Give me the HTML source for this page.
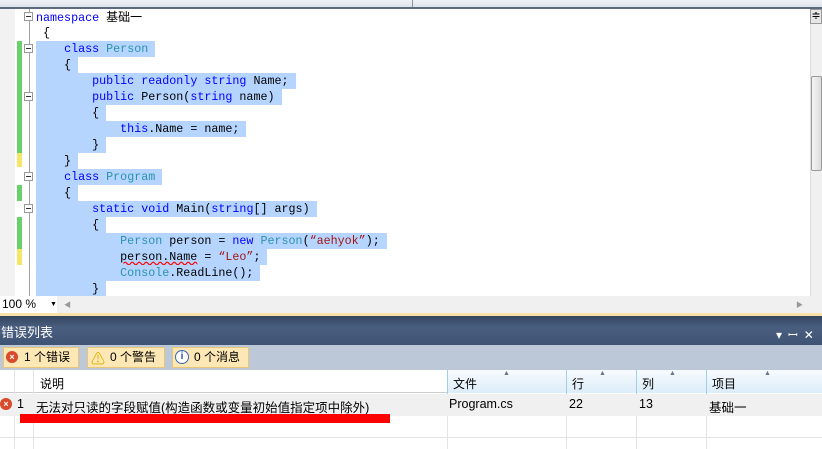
<!DOCTYPE html>
<html><head><meta charset="utf-8"><style>
*{margin:0;padding:0;box-sizing:border-box}
body{width:822px;height:449px;overflow:hidden;background:#fff;position:relative;font-family:"Liberation Sans","Noto Sans CJK SC",sans-serif}
.abs{position:absolute}
.code{font-family:"Liberation Mono","Noto Sans CJK SC",monospace;font-size:11.7px;line-height:16px;white-space:pre}
.ln{position:absolute;left:36px;height:16px}
.sel{background:#b5d5ff}
.k{color:#0000ff}.t{color:#2b91af}.s{color:#a31515}.b{color:#000}
.box{position:absolute;left:24px;width:9px;height:9px;border:1px solid #999;background:#fff}
.box:after{content:"";position:absolute;left:1px;top:3px;width:5px;height:1px;background:#333}
.cjk{font-family:"Liberation Sans","Noto Sans CJK SC",sans-serif;font-size:12px}
.g{position:absolute;width:1px;background:#e4e4e4;top:394px;height:55px}
.h{position:absolute;width:1px;background:#9fd0ea;top:370px;height:24px}
</style></head><body>
<div class="abs" style="left:0;top:0;width:822px;height:7px;background:linear-gradient(#eef1f6,#dde3ec)"></div>
<div class="abs" style="left:412px;top:0;width:1px;height:7px;background:#8a94a4"></div>
<div class="abs" style="left:0;top:7px;width:822px;height:2px;background:#5d6a7c"></div>
<div class="abs" style="left:0;top:9px;width:15px;height:287px;background:#f2f2f2"></div>
<div class="abs" style="left:29px;top:9px;width:1px;height:287px;background:#a0a0a0"></div>
<div class="abs" style="left:17px;top:41px;width:5px;height:112px;background:#6ad06a"></div>
<div class="abs" style="left:17px;top:153px;width:5px;height:14px;background:#f5e66a"></div>
<div class="abs" style="left:17px;top:185px;width:5px;height:16px;background:#6ad06a"></div>
<div class="abs" style="left:17px;top:217px;width:5px;height:32px;background:#6ad06a"></div>
<div class="abs" style="left:17px;top:249px;width:5px;height:16px;background:#f5e66a"></div>
<div class="box" style="top:12px"></div>
<div class="box" style="top:44px"></div>
<div class="box" style="top:92px"></div>
<div class="box" style="top:172px"></div>
<div class="box" style="top:204px"></div>
<div class="code">
<div class="ln" style="top:9px"><span class="k">namespace</span> <span class="cjk">基础一</span></div>
<div class="ln" style="top:25px"> {</div>
<div class="ln sel" style="top:41px">    <span class="k">class</span> <span class="t">Person</span> </div>
<div class="ln sel" style="top:57px">    { </div>
<div class="ln sel" style="top:73px">        <span class="k">public</span> <span class="k">readonly</span> <span class="k">string</span> Name; </div>
<div class="ln sel" style="top:89px">        <span class="k">public</span> Person(<span class="k">string</span> name) </div>
<div class="ln sel" style="top:105px">        { </div>
<div class="ln sel" style="top:121px">            <span class="k">this</span>.Name = name; </div>
<div class="ln sel" style="top:137px">        } </div>
<div class="ln sel" style="top:153px">    } </div>
<div class="ln sel" style="top:169px">    <span class="k">class</span> <span class="t">Program</span> </div>
<div class="ln sel" style="top:185px">    { </div>
<div class="ln sel" style="top:201px">        <span class="k">static</span> <span class="k">void</span> Main(<span class="k">string</span>[] args) </div>
<div class="ln sel" style="top:217px">        { </div>
<div class="ln sel" style="top:233px">            <span class="t">Person</span> person = <span class="k">new</span> <span class="t">Person</span>(<span class="s">“aehyok”</span>); </div>
<div class="ln sel" style="top:249px">            <span style="text-decoration:underline wavy red">person.Name</span> = <span class="s">“Leo”</span>; </div>
<div class="ln sel" style="top:265px">            <span class="t">Console</span>.ReadLine(); </div>
<div class="ln sel" style="top:281px;height:15px">        } </div>
</div>
<div class="abs" style="left:810px;top:9px;width:12px;height:287px;background:#f0f0f0;border-left:1px solid #ddd"></div>
<div class="abs" style="left:810px;top:9px;width:12px;height:15px;background:#e6e6e6;border:1px solid #999;font-size:11px;line-height:12px;text-align:center">≑</div>
<div class="abs" style="left:811px;top:76px;width:11px;height:95px;background:linear-gradient(90deg,#f4f4f4,#dcdcdc);border:1px solid #999;border-radius:2px"></div>
<div class="abs" style="left:0;top:296px;width:822px;height:17px;background:#f0f0f0"></div>
<div class="abs" style="left:0;top:296px;width:57px;height:17px;background:#fff;font-size:12px;line-height:17px;padding-left:2px">100 %<span style="position:absolute;left:50px;font-size:7px">▼</span></div>
<div class="abs" style="left:64px;top:300px;font-size:7px;color:#999">◀</div>
<div class="abs" style="left:796px;top:300px;font-size:7px;color:#999">▶</div>
<div class="abs" style="left:0;top:313px;width:822px;height:3px;background:#f8e2a8"></div>
<div class="abs" style="left:0;top:316px;width:822px;height:29px;background:linear-gradient(#34465f,#4a5e80 40%,#3f5374);color:#fff;font-size:13px;line-height:34px;padding-left:1px">错误列表</div>
<div class="abs" style="left:776px;top:326px;color:#fff;font-size:12px;letter-spacing:6px">▾ꟷ✕</div>
<div class="abs" style="left:0;top:345px;width:822px;height:25px;background:#bcc7d7"></div>
<div class="abs" style="left:3px;top:347px;width:76px;height:21px;background:#fde8b5;border:1px solid #e9c57a;font-size:12px;line-height:19px;padding-left:20px">1 个错误</div>
<div class="abs" style="left:6px;top:351px;width:12px;height:12px;border-radius:50%;background:#d84a2a;color:#fff;font-size:9px;line-height:12px;text-align:center;font-weight:bold">×</div>
<div class="abs" style="left:87px;top:347px;width:78px;height:21px;background:#fde8b5;border:1px solid #e9c57a;font-size:12px;line-height:19px;padding-left:22px">0 个警告</div>
<div class="abs" style="left:91px;top:349px;font-size:14px;color:#e0b000">⚠</div>
<div class="abs" style="left:172px;top:347px;width:77px;height:21px;background:#fde8b5;border:1px solid #e9c57a;font-size:12px;line-height:19px;padding-left:21px">0 个消息</div>
<div class="abs" style="left:175px;top:350px;width:14px;height:14px;border-radius:50%;border:1px solid #3a62b0;background:#fff;color:#2a52a0;font-size:10px;line-height:12px;text-align:center;font-weight:bold">i</div>
<div class="abs" style="left:0;top:370px;width:822px;height:23px;background:#fff;border-bottom:1px solid #ccc"></div>
<div class="abs" style="left:447px;top:370px;width:375px;height:23px;background:linear-gradient(#f7fbfe,#dcedf8)"></div>
<div class="abs" style="left:14px;top:370px;width:1px;height:79px;background:#e4e4e4"></div>
<div class="abs" style="left:33px;top:370px;width:1px;height:79px;background:#e4e4e4"></div>
<div class="h" style="left:447px"></div><div class="h" style="left:566px"></div><div class="h" style="left:636px"></div><div class="h" style="left:706px"></div>
<div class="g" style="left:447px"></div><div class="g" style="left:566px"></div><div class="g" style="left:636px"></div><div class="g" style="left:706px"></div>
<div class="abs" style="font-size:12px;top:375px;left:40px">说明</div>
<div class="abs" style="font-size:12px;top:375px;left:453px">文件</div>
<div class="abs" style="font-size:12px;top:375px;left:572px">行</div>
<div class="abs" style="font-size:12px;top:375px;left:642px">列</div>
<div class="abs" style="font-size:12px;top:375px;left:712px">项目</div>
<div class="abs" style="font-size:7px;top:370px;left:503px;color:#678">▲</div>
<div class="abs" style="font-size:7px;top:370px;left:599px;color:#678">▲</div>
<div class="abs" style="font-size:7px;top:370px;left:669px;color:#678">▲</div>
<div class="abs" style="font-size:7px;top:370px;left:764px;color:#678">▲</div>
<div class="abs" style="left:0;top:394px;width:822px;height:22px;background:#f0f0f0"></div>
<div class="abs" style="left:0;top:398px;width:12px;height:12px;border-radius:50%;background:#d84a2a;color:#fff;font-size:9px;line-height:12px;text-align:center;font-weight:bold">×</div>
<div class="abs" style="font-size:12.5px;top:397px;left:17px">1</div>
<div class="abs" style="font-size:12.5px;top:397px;left:36px">无法对只读的字段赋值(构造函数或变量初始值指定项中除外)</div>
<div class="abs" style="font-size:12.5px;top:397px;left:449px">Program.cs</div>
<div class="abs" style="font-size:12.5px;top:397px;left:569px">22</div>
<div class="abs" style="font-size:12.5px;top:397px;left:639px">13</div>
<div class="abs" style="font-size:12.5px;top:397px;left:709px">基础一</div>
<div class="abs" style="left:20px;top:414px;width:370px;height:9px;background:#ff0000"></div>
<div class="abs" style="left:0;top:437px;width:822px;height:1px;background:#e4e4e4"></div>
</body></html>
